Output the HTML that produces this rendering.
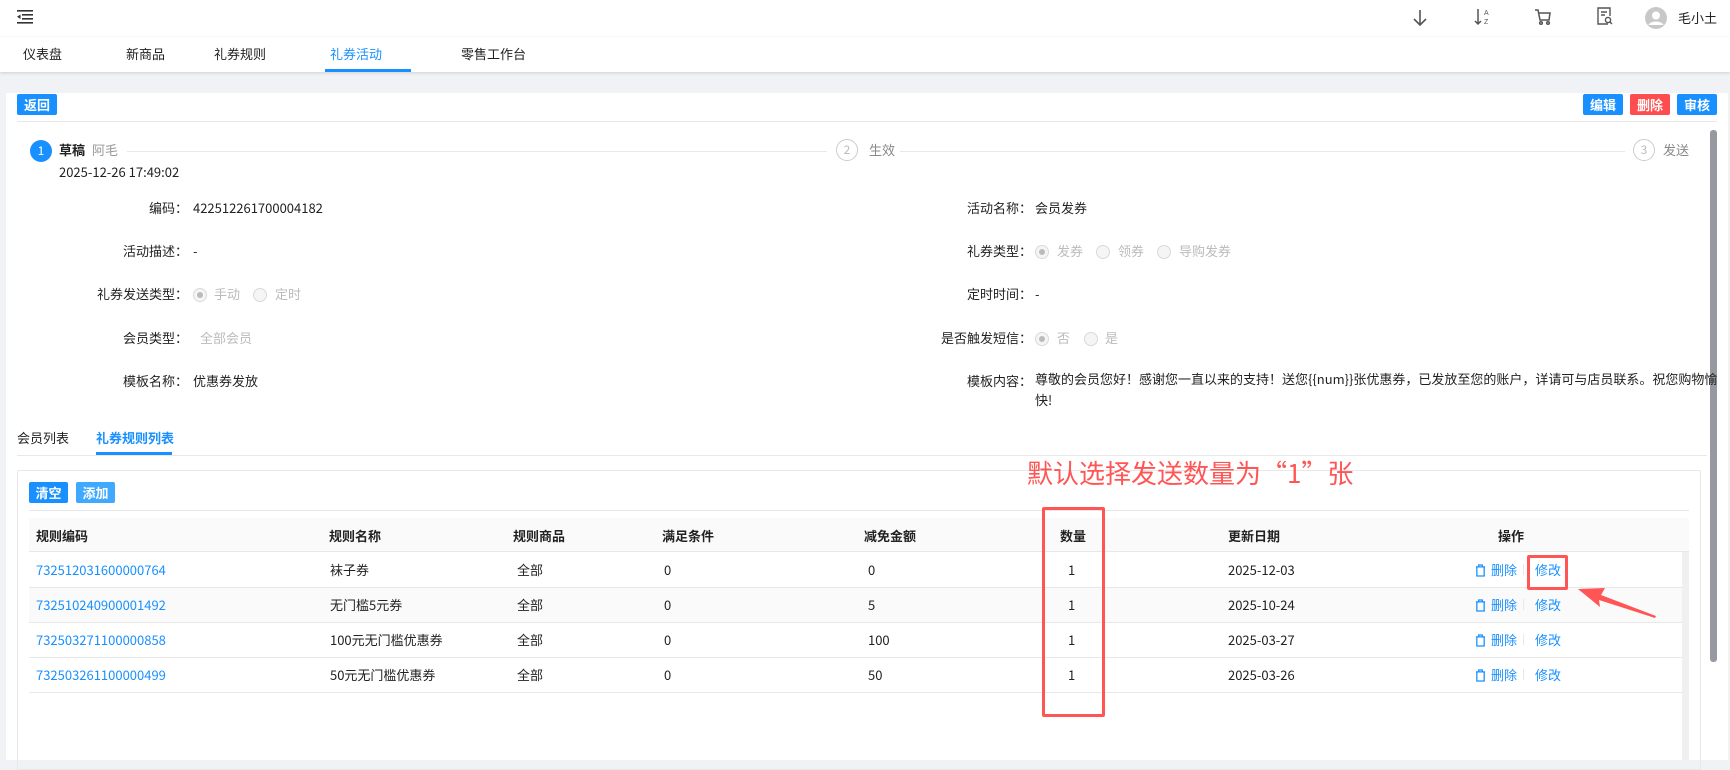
<!DOCTYPE html>
<html><head><meta charset="utf-8"><style>
*{margin:0;padding:0;box-sizing:border-box}
body{width:1730px;height:760px;overflow:hidden;background:#f0f2f5;font-family:"Noto Sans CJK SC","Liberation Sans",sans-serif;font-size:13px;line-height:18px;color:#222;position:relative}
.a{position:absolute;white-space:nowrap}
.btn{position:absolute;height:21px;line-height:21px;color:#fff;font-size:13px;font-weight:bold;text-align:center;border-radius:2px}
.lbl{position:absolute;text-align:right;width:200px}
.g{color:#bbb}
.rd{position:absolute;width:14px;height:14px;border:1px solid #d9d9d9;border-radius:50%;background:#f5f5f5}
.rd.on::after{content:"";position:absolute;left:3px;top:3px;width:6px;height:6px;border-radius:50%;background:#bbb}
.hl{position:absolute;left:29px;width:1653px;height:1px;background:#e8e8e8}
.blue{color:#1890ff}
</style></head><body>
<!-- header -->
<div class="a" style="left:0;top:0;width:1730px;height:37px;background:#fff"></div>
<svg class="a" style="left:17px;top:10px" width="16" height="14"><rect x="0" y="0" width="16" height="1.6" fill="#333"/><rect x="5" y="4" width="11" height="1.6" fill="#333"/><rect x="5" y="8" width="11" height="1.6" fill="#333"/><rect x="0" y="12" width="16" height="1.6" fill="#333"/><path d="M0 6.8L3.5 4.5V9Z" fill="#333"/></svg>
<svg class="a" style="left:1412px;top:9px" width="16" height="18" fill="none" stroke="#555" stroke-width="1.6"><path d="M8 1V16M2 10L8 16L14 10"/></svg>
<svg class="a" style="left:1474px;top:7px" width="18" height="20" fill="none" stroke="#555" stroke-width="1.5"><path d="M4 2V17M1 14L4 17L7 14"/><text x="10" y="8" font-size="7" fill="#555" stroke="none" font-family="Liberation Sans">A</text><text x="10" y="17" font-size="7" fill="#555" stroke="none" font-family="Liberation Sans">Z</text></svg>
<svg class="a" style="left:1534px;top:8px" width="18" height="18" fill="none" stroke="#555" stroke-width="1.5"><path d="M1 2H4L6 12H15L16 5H5"/><circle cx="7" cy="15" r="1.3"/><circle cx="14" cy="15" r="1.3"/></svg>
<svg class="a" style="left:1597px;top:7px" width="16" height="20" fill="none" stroke="#555" stroke-width="1.4"><path d="M11 17H1V1H13V9"/><path d="M4 5H10M4 8H8"/><circle cx="11" cy="13" r="2.6"/><path d="M13 15L15 17"/></svg>
<svg class="a" style="left:1645px;top:7px" width="22" height="22"><circle cx="11" cy="11" r="11" fill="#c8c8c8"/><circle cx="11" cy="8.5" r="4" fill="#fff"/><path d="M3.5 18C5 13.5 17 13.5 18.5 18Z" fill="#fff"/></svg>
<div class="a" style="left:1678px;top:9px;font-size:13px">毛小土</div>
<!-- tabs -->
<div class="a" style="left:0;top:37px;width:1730px;height:35px;background:#fff;box-shadow:0 1px 3px rgba(0,0,0,.15)"></div>
<div class="a" style="left:23px;top:45px">仪表盘</div>
<div class="a" style="left:126px;top:45px">新商品</div>
<div class="a" style="left:214px;top:45px">礼券规则</div>
<div class="a blue" style="left:330px;top:45px">礼券活动</div>
<div class="a" style="left:461px;top:45px">零售工作台</div>
<div class="a" style="left:325px;top:69px;width:86px;height:3px;background:#1890ff"></div>
<!-- card -->
<div class="a" style="left:6px;top:93px;width:1722px;height:667px;background:#fff"></div>
<div class="btn" style="left:17px;top:94px;width:40px;background:#1890ff">返回</div>
<div class="btn" style="left:1583px;top:94px;width:40px;background:#1890ff">编辑</div>
<div class="btn" style="left:1630px;top:94px;width:40px;background:#ff4d4f">删除</div>
<div class="btn" style="left:1677px;top:94px;width:40px;background:#1890ff">审核</div>
<div class="a" style="left:17px;top:121px;width:1700px;height:1px;background:#e8e8e8"></div>
<div class="a" style="left:1710px;top:130px;width:7px;height:532px;background:#96999f;border-radius:3px"></div>
<!-- steps -->
<div class="a" style="left:30px;top:140px;width:22px;height:22px;border-radius:50%;background:#1890ff;color:#fff;text-align:center;line-height:22px;font-size:12px">1</div>
<div class="a" style="left:59px;top:141px;font-weight:bold">草稿</div>
<div class="a" style="left:92px;top:141px;color:#999">阿毛</div>
<div class="a" style="left:127px;top:151px;width:700px;height:1px;background:#e8e8e8"></div>
<div class="a" style="left:836px;top:139px;width:22px;height:22px;border-radius:50%;border:1px solid #ccc;color:#bbb;text-align:center;line-height:20px;font-size:12px">2</div>
<div class="a" style="left:869px;top:141px;color:#888">生效</div>
<div class="a" style="left:900px;top:151px;width:725px;height:1px;background:#e8e8e8"></div>
<div class="a" style="left:1633px;top:139px;width:22px;height:22px;border-radius:50%;border:1px solid #ccc;color:#bbb;text-align:center;line-height:20px;font-size:12px">3</div>
<div class="a" style="left:1663px;top:141px;color:#888">发送</div>
<div class="a" style="left:59px;top:163px">2025-12-26 17:49:02</div>
<!-- form left -->
<div class="lbl" style="left:-12px;top:199px">编码：</div><div class="a" style="left:193px;top:199px">422512261700004182</div>
<div class="lbl" style="left:-12px;top:242px">活动描述：</div><div class="a" style="left:193px;top:242px">-</div>
<div class="lbl" style="left:-12px;top:285px">礼券发送类型：</div>
<div class="rd on" style="left:193px;top:288px"></div><div class="a g" style="left:214px;top:285px">手动</div>
<div class="rd" style="left:253px;top:288px"></div><div class="a g" style="left:275px;top:285px">定时</div>
<div class="lbl" style="left:-12px;top:329px">会员类型：</div><div class="a g" style="left:200px;top:329px">全部会员</div>
<div class="lbl" style="left:-12px;top:372px">模板名称：</div><div class="a" style="left:193px;top:372px">优惠券发放</div>
<!-- form right -->
<div class="lbl" style="left:832px;top:199px">活动名称：</div><div class="a" style="left:1035px;top:199px">会员发券</div>
<div class="lbl" style="left:832px;top:242px">礼券类型：</div>
<div class="rd on" style="left:1035px;top:245px"></div><div class="a g" style="left:1057px;top:242px">发券</div>
<div class="rd" style="left:1096px;top:245px"></div><div class="a g" style="left:1118px;top:242px">领券</div>
<div class="rd" style="left:1157px;top:245px"></div><div class="a g" style="left:1179px;top:242px">导购发券</div>
<div class="lbl" style="left:832px;top:285px">定时时间：</div><div class="a" style="left:1035px;top:285px">-</div>
<div class="lbl" style="left:832px;top:329px">是否触发短信：</div>
<div class="rd on" style="left:1035px;top:332px"></div><div class="a g" style="left:1057px;top:329px">否</div>
<div class="rd" style="left:1084px;top:332px"></div><div class="a g" style="left:1105px;top:329px">是</div>
<div class="lbl" style="left:832px;top:372px">模板内容：</div>
<div class="a" style="left:1035px;top:368px;line-height:21px">尊敬的会员您好！感谢您一直以来的支持！送您{{num}}张优惠券，已发放至您的账户，详请可与店员联系。祝您购物愉<br>快!</div>
<!-- sub tabs -->
<div class="a" style="left:17px;top:429px">会员列表</div>
<div class="a blue" style="left:96px;top:429px;font-weight:bold">礼券规则列表</div>
<div class="a" style="left:17px;top:455px;width:1690px;height:1px;background:#e8e8e8"></div>
<div class="a" style="left:96px;top:452px;width:76px;height:3px;background:#1890ff"></div>
<!-- table card -->
<div class="a" style="left:17px;top:470px;width:1684px;height:300px;border:1px solid #e8e8e8;border-radius:2px"></div>
<div class="btn" style="left:29px;top:482px;width:39px;background:#1890ff">清空</div>
<div class="btn" style="left:76px;top:482px;width:39px;background:#40a9ff">添加</div>
<div class="a" style="left:29px;top:510px;width:1660px;height:1px;background:#e8e8e8"></div>
<div class="a" style="left:29px;top:518px;width:1660px;height:34px;background:#fafafa;border-bottom:1px solid #e8e8e8"></div>
<div class="a" style="left:29px;top:588px;width:1653px;height:35px;background:#fafafa"></div>
<div class="hl" style="top:587px"></div><div class="hl" style="top:622px"></div><div class="hl" style="top:657px"></div><div class="hl" style="top:692px"></div>
<div class="a" style="left:1682px;top:552px;width:7px;height:208px;background:#f0f0f0"></div>
<div style="font-weight:bold">
<div class="a" style="left:36px;top:527px">规则编码</div>
<div class="a" style="left:329px;top:527px">规则名称</div>
<div class="a" style="left:513px;top:527px">规则商品</div>
<div class="a" style="left:662px;top:527px">满足条件</div>
<div class="a" style="left:864px;top:527px">减免金额</div>
<div class="a" style="left:1060px;top:527px">数量</div>
<div class="a" style="left:1228px;top:527px">更新日期</div>
<div class="a" style="left:1498px;top:527px">操作</div>
</div>
<div class="a blue" style="left:36px;top:561px">732512031600000764</div><div class="a" style="left:330px;top:561px">袜子券</div><div class="a" style="left:517px;top:561px">全部</div><div class="a" style="left:664px;top:561px">0</div><div class="a" style="left:868px;top:561px">0</div><div class="a" style="left:1068px;top:561px">1</div><div class="a" style="left:1228px;top:561px">2025-12-03</div>
<div class="a blue" style="left:36px;top:596px">732510240900001492</div><div class="a" style="left:330px;top:596px">无门槛5元券</div><div class="a" style="left:517px;top:596px">全部</div><div class="a" style="left:664px;top:596px">0</div><div class="a" style="left:868px;top:596px">5</div><div class="a" style="left:1068px;top:596px">1</div><div class="a" style="left:1228px;top:596px">2025-10-24</div>
<div class="a blue" style="left:36px;top:631px">732503271100000858</div><div class="a" style="left:330px;top:631px">100元无门槛优惠券</div><div class="a" style="left:517px;top:631px">全部</div><div class="a" style="left:664px;top:631px">0</div><div class="a" style="left:868px;top:631px">100</div><div class="a" style="left:1068px;top:631px">1</div><div class="a" style="left:1228px;top:631px">2025-03-27</div>
<div class="a blue" style="left:36px;top:666px">732503261100000499</div><div class="a" style="left:330px;top:666px">50元无门槛优惠券</div><div class="a" style="left:517px;top:666px">全部</div><div class="a" style="left:664px;top:666px">0</div><div class="a" style="left:868px;top:666px">50</div><div class="a" style="left:1068px;top:666px">1</div><div class="a" style="left:1228px;top:666px">2025-03-26</div>
<!-- ops -->
<svg width="0" height="0" style="position:absolute"><defs><symbol id="tr" viewBox="0 0 12 14"><path d="M1 3H11M4 3V1H8V3M2 3V13H10V3" fill="none" stroke="#1890ff" stroke-width="1.4"/></symbol></defs></svg>
<svg class="a" style="left:1475px;top:564px" width="11" height="13"><use href="#tr"/></svg><div class="a blue" style="left:1491px;top:561px">删除</div><div class="a" style="left:1523px;top:564px;width:1px;height:11px;background:#e8e8e8"></div><div class="a blue" style="left:1535px;top:561px">修改</div>
<svg class="a" style="left:1475px;top:599px" width="11" height="13"><use href="#tr"/></svg><div class="a blue" style="left:1491px;top:596px">删除</div><div class="a" style="left:1523px;top:599px;width:1px;height:11px;background:#e8e8e8"></div><div class="a blue" style="left:1535px;top:596px">修改</div>
<svg class="a" style="left:1475px;top:634px" width="11" height="13"><use href="#tr"/></svg><div class="a blue" style="left:1491px;top:631px">删除</div><div class="a" style="left:1523px;top:634px;width:1px;height:11px;background:#e8e8e8"></div><div class="a blue" style="left:1535px;top:631px">修改</div>
<svg class="a" style="left:1475px;top:669px" width="11" height="13"><use href="#tr"/></svg><div class="a blue" style="left:1491px;top:666px">删除</div><div class="a" style="left:1523px;top:669px;width:1px;height:11px;background:#e8e8e8"></div><div class="a blue" style="left:1535px;top:666px">修改</div>
<!-- annotations -->
<div class="a" style="left:1027px;top:456px;font-size:26px;line-height:34px;color:#f55">默认选择发送数量为“1”张</div>
<div class="a" style="left:1042px;top:507px;width:63px;height:210px;border:3px solid #f55;border-radius:2px"></div>
<div class="a" style="left:1527px;top:555px;width:41px;height:35px;border:3px solid #f55;border-radius:2px"></div>
<svg class="a" style="left:1570px;top:580px" width="100" height="45"><path d="M8 9L35 8L31 15L86 36L85 38L29 20L30 27Z" fill="#f55"/></svg>
</body></html>
